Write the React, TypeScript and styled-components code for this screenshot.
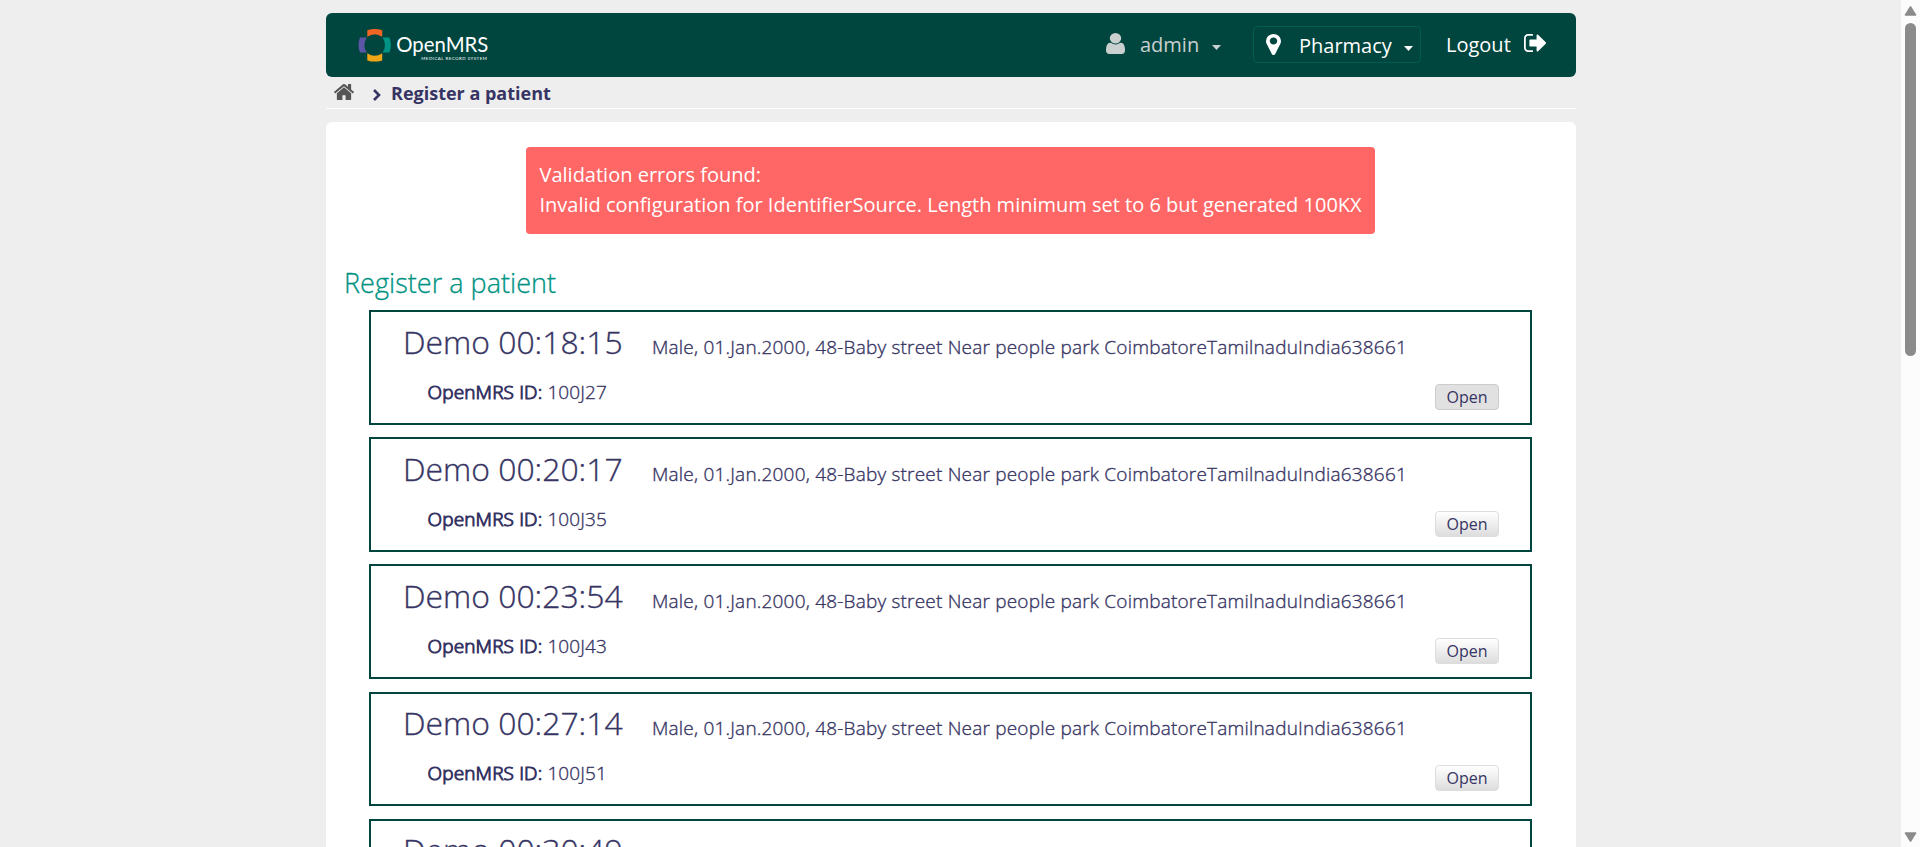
import React from 'react';
import styled, { createGlobalStyle } from 'styled-components';

const GlobalStyle = createGlobalStyle`
  * { box-sizing: border-box; }
  html, body { margin: 0; height: 100%; overflow: hidden; background: #eeeeee; }
  body { font-family: 'Open Sans', 'Noto Sans', sans-serif; color: #363463; font-size: 20px; }
`;

const Viewport = styled.div`
  display: flex;
  height: 847px;
  overflow: hidden;
`;

const Page = styled.div`
  flex: 1;
  height: 847px;
  overflow: hidden;
  padding: 13px 325px 0 326px;
`;

const Header = styled.header`
  height: 64px;
  display: flex;
  align-items: flex-start;
  background: #00463f;
  border-radius: 6px;
  color: #fff;
  line-height: 28px;
`;

const Logo = styled.svg`
  display: block;
  margin: 13px auto 0 30px;
`;

const Account = styled.div`
  display: flex;
  color: #c9d0cf;
  margin-top: 18px;
  width: 148px;
`;

const LocationPicker = styled.div`
  display: flex;
  margin-top: 13px;
  width: 168px;
  height: 37px;
  padding: 5px 0 0 12px;
  border: 1px solid #005b51;
  border-radius: 4px;
`;

const Logout = styled.div`
  display: flex;
  margin: 18px 30px 0 25px;
  width: 100px;
  justify-content: space-between;
`;

const Icon = styled.svg<{ $top: number; $right?: number; $left?: number }>`
  display: block;
  flex: none;
  fill: currentColor;
  margin: ${p => p.$top}px ${p => p.$right ?? 0}px 0 ${p => p.$left ?? 0}px;
`;

const Breadcrumbs = styled.nav`
  height: 32px;
  display: flex;
  padding-left: 8px;
  border-bottom: 1px solid #fff;
  font-size: 18px;
  font-weight: 700;
  line-height: 33px;
`;

const Content = styled.main`
  margin-top: 13px;
  height: 900px;
  padding: 25px 18px 0;
  background: #fff;
  border-radius: 6px;
`;

const Alert = styled.div`
  width: 849px;
  height: 87px;
  margin: 0 0 0 182px;
  padding: 13px 13px 11px 13.5px;
  border-radius: 4px;
  background: #ff6666;
  color: #fff;
  line-height: 30px;
  white-space: nowrap;
`;

const Title = styled.h2`
  margin: 29px 0 8px;
  font-size: 27px;
  line-height: 39px;
  font-weight: 300;
  letter-spacing: 0.03px;
  -webkit-text-stroke: 0.3px currentColor;
  color: #009384;
`;

const Results = styled.div`
  display: flex;
  flex-direction: column;
  gap: 12.4px;
  width: 1163px;
  margin-left: 25px;
`;

const Card = styled.section`
  flex: none;
  height: 114.8px;
  border: 2px solid #00463f;
  padding: 7.6px 31px 0 32px;
`;

const Summary = styled.div`
  display: flex;
  align-items: baseline;
  white-space: nowrap;
`;

const Name = styled.h1`
  margin: 0;
  width: 249px;
  font-size: 31.9px;
  line-height: 44px;
  font-weight: 300;
  -webkit-text-stroke: 0.35px currentColor;
`;

const Details = styled.span`
  font-size: 19px;
  font-weight: 300;
  letter-spacing: 0.2px;
  -webkit-text-stroke: 0.35px currentColor;
`;

const IdentifierRow = styled.div`
  display: flex;
  justify-content: space-between;
  padding: 14px 0 0 24.5px;
  font-size: 19px;
  line-height: 28px;
  font-weight: 300;
  letter-spacing: 0.1px;
  -webkit-text-stroke: 0.35px currentColor;

  strong {
    font-weight: 300;
    letter-spacing: 0.15px;
    -webkit-text-stroke: 1px currentColor;
  }
`;

const OpenButton = styled.button<{ $active?: boolean }>`
  width: 64px;
  height: 26px;
  margin-top: 6px;
  padding: 0;
  border: 1px solid ${p => (p.$active ? '#cccccc' : '#dddddd')};
  border-radius: 4px;
  background: ${p => (p.$active ? '#e1e1e1' : 'linear-gradient(#ffffff, #dddddd)')};
  color: #363463;
  font: 400 16px/24px 'Open Sans', sans-serif;
  -webkit-text-stroke: 0;
`;

const ScrollTrack = styled.div`
  width: 19px;
  height: 847px;
  padding: 6px 0 5px 3px;
  background: #fcfcfc;
  display: flex;
  flex-direction: column;
`;

const ScrollThumb = styled.div`
  width: 11px;
  height: 333px;
  margin: 7px 0 auto 1px;
  border-radius: 6px;
  background: #8b8b8b;
`;

const Caret = ({ top, left }: { top: number; left: number }) => (
  <Icon $top={top} $left={left} width="9" height="5" viewBox="0 0 9 5"><path d="M0 0H9L4.5 5Z" /></Icon>
);

const patients = [
  { name: 'Demo 00:18:15', id: '100J27' },
  { name: 'Demo 00:20:17', id: '100J35' },
  { name: 'Demo 00:23:54', id: '100J43' },
  { name: 'Demo 00:27:14', id: '100J51' },
  { name: 'Demo 00:30:49', id: '100J68' },
];

export default function App() {
  return (
    <Viewport>
      <GlobalStyle />
      <Page>
        <Header>
          <Logo width="140" height="40" viewBox="356 26 140 40">
            <path fill="#f26522" d="M367.3 30.2Q374.7 27.8 382.2 30.2V36.8Q374.7 31.6 367.3 36.8Z" />
            <path fill="#eea616" d="M367.3 60.4Q374.7 62.8 382.2 60.4V53.2Q374.7 58.4 367.3 53.2Z" />
            <path fill="#5b57a6" d="M360 37.4Q357 45 360 52.4H366.8Q361.9 45 366.8 37.4Z" />
            <path fill="#009384" d="M389.4 37.4Q392.4 45 389.4 52.4H382.6Q387.5 45 382.6 37.4Z" />
            <text x="396.3" y="52.4" fill="#fff" fontFamily="Lato" fontSize="21.3" textLength="92" lengthAdjust="spacingAndGlyphs">OpenMRS</text>
            <text x="421.3" y="60" fill="#fff" fontFamily="Lato" fontSize="4.4" textLength="65.5">MEDICAL RECORD SYSTEM</text>
          </Logo>
          <Account>
            <Icon $top={2} $left={0.7} $right={15.3} width="19" height="21" viewBox="256 128 1280 1536" preserveAspectRatio="none">
              <path d="M1536 1399q0 109-62.5 187t-150.5 78h-854q-88 0-150.5-78t-62.5-187q0-85 8.5-160.5t31.5-152 58.5-131 94-89 134.5-34.5q131 128 313 128t313-128q76 0 134.5 34.5t94 89 58.5 131 31.5 152 8.5 160.5zm-256-887q0 159-112.5 271.5t-271.5 112.5-271.5-112.5-112.5-271.5 112.5-271.5 271.5-112.5 271.5 112.5 112.5 271.5z" />
            </Icon>
            admin
            <Caret top={14} left={13} />
          </Account>
          <LocationPicker>
            <Icon $top={2} $right={18} width="15" height="21" viewBox="384 128 1024 1536" preserveAspectRatio="none">
              <path d="M1152 640q0-106-75-181t-181-75-181 75-75 181 75 181 181 75 181-75 75-181zm256 0q0 109-33 179l-364 774q-16 33-47.5 52t-67.5 19-67.5-19-46.5-52l-365-774q-33-70-33-179 0-212 150-362t362-150 362 150 150 362z" />
            </Icon>
            Pharmacy
            <Caret top={14} left={12} />
          </LocationPicker>
          <Logout>
            Logout
            <Icon $top={3} width="22" height="18" viewBox="64 256 1568 1280" preserveAspectRatio="none">
              <path d="M704 1440q0 4 1 20t.5 26.5-3 23.5-10 19.5-20.5 6.5h-320q-119 0-203.5-84.5t-84.5-203.5v-704q0-119 84.5-203.5t203.5-84.5h320q13 0 22.5 9.5t9.5 22.5q0 4 1 20t.5 26.5-3 23.5-10 19.5-20.5 6.5h-320q-66 0-113 47t-47 113v704q0 66 47 113t113 47h312l11.5 1 11.5 3 8 5.5 7 9 2 13.5zm928-544q0 26-19 45l-544 544q-19 19-45 19t-45-19-19-45v-288h-448q-26 0-45-19t-19-45v-384q0-26 19-45t45-19h448v-288q0-26 19-45t45-19 45 19l544 544q19 19 19 45z" />
            </Icon>
          </Logout>
        </Header>
        <Breadcrumbs>
          <Icon $top={7} $right={19} width="20" height="16" viewBox="89 253 1614 1283" preserveAspectRatio="none" color="#555">
            <path d="M1472 992v480q0 26-19 45t-45 19h-384v-384h-256v384h-384q-26 0-45-19t-19-45v-480q0-1 .5-3t.5-3l575-474 575 474q1 2 1 6zm223-69l-62 74q-8 9-21 11h-3q-13 0-21-7l-692-577-692 577q-12 8-24 7-13-2-21-11l-62-74q-8-10-7-23.5t11-21.5l719-599q32-26 76-26t76 26l244 204v-195q0-14 9-23t23-9h192q14 0 23 9t9 23v408l219 182q10 8 11 21.5t-7 23.5z" />
          </Icon>
          <Icon $top={12} $right={10} width="8" height="12" viewBox="0 0 8 12">
            <path d="M1 1L6 6L1 11" fill="none" stroke="#363463" strokeWidth="2.6" />
          </Icon>
          Register a patient
        </Breadcrumbs>
        <Content>
          <Alert>
            Validation errors found:<br />
            Invalid configuration for IdentifierSource. Length minimum set to 6 but generated 100KX
          </Alert>
          <Title>Register a patient</Title>
          <Results>
            {patients.map((p, i) => (
              <Card key={p.id}>
                <Summary>
                  <Name>{p.name}</Name>
                  <Details>Male, 01.Jan.2000, 48-Baby street Near people park CoimbatoreTamilnaduIndia638661</Details>
                </Summary>
                <IdentifierRow>
                  <span><strong>OpenMRS ID:</strong> {p.id}</span>
                  <OpenButton $active={i === 0}>Open</OpenButton>
                </IdentifierRow>
              </Card>
            ))}
          </Results>
        </Content>
      </Page>
      <ScrollTrack>
        <svg width="13" height="10" viewBox="0 0 13 10"><path d="M6.5 1L11.5 9H1.5Z" fill="#8b8b8b" stroke="#8b8b8b" strokeWidth="1.6" strokeLinejoin="round" /></svg>
        <ScrollThumb />
        <svg width="13" height="10" viewBox="0 0 13 10"><path d="M6.5 9L11.5 1H1.5Z" fill="#8b8b8b" stroke="#8b8b8b" strokeWidth="1.6" strokeLinejoin="round" /></svg>
      </ScrollTrack>
    </Viewport>
  );
}
